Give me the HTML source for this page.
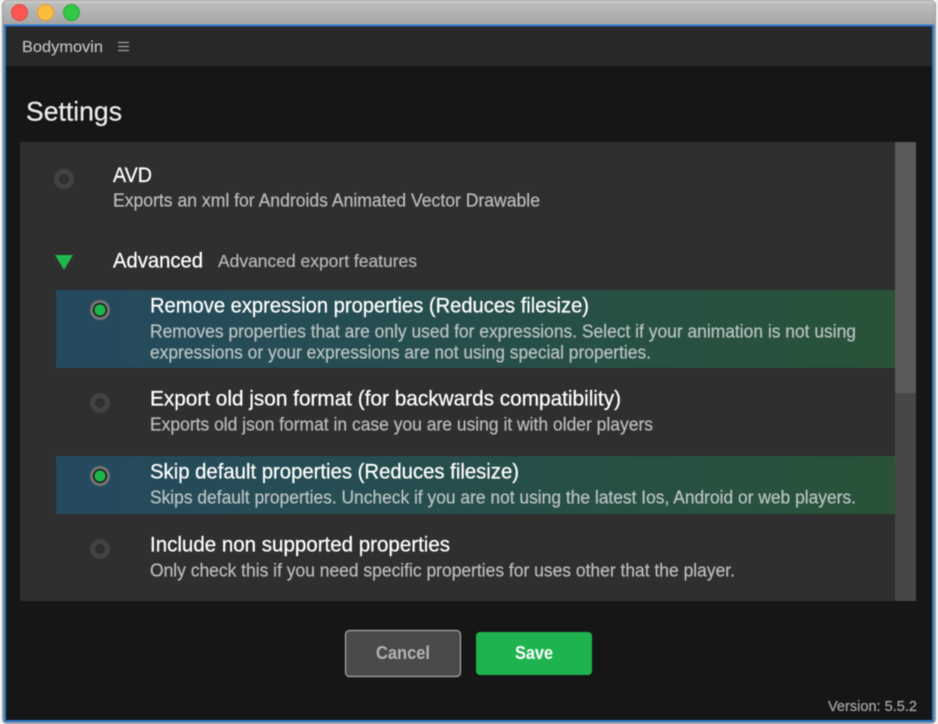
<!DOCTYPE html>
<html><head><meta charset="utf-8"><style>
html,body{margin:0;padding:0;background:#f2f2f2;width:938px;height:724px;overflow:hidden}
svg{display:block;font-family:"Liberation Sans",sans-serif;filter:blur(.45px)}
</style></head><body>
<svg width="938" height="724" viewBox="0 0 938 724" xmlns="http://www.w3.org/2000/svg">
<defs>
<linearGradient id="tb" x1="0" y1="0" x2="0" y2="1"><stop offset="0" stop-color="#d4d4d4"/><stop offset=".1" stop-color="#bcbcbc"/><stop offset="1" stop-color="#a2a2a2"/></linearGradient>
<linearGradient id="row" x1="0" y1="0" x2="1" y2="0"><stop offset="0" stop-color="#254a60"/><stop offset="1" stop-color="#295338"/></linearGradient>
</defs>
<rect width="938" height="724" fill="#f2f2f2"/>
<rect x="2" y="0" width="934" height="724" rx="5" fill="#9a9a9a"/>
<rect x="3" y="1" width="932" height="26" rx="4" fill="url(#tb)"/>
<circle cx="19.500" cy="12.500" r="8" fill="#fc5753" stroke="#df4744"/>
<circle cx="45.500" cy="12.500" r="8" fill="#fdbc40" stroke="#de9f34"/>
<circle cx="71.500" cy="12.500" r="8" fill="#33c748" stroke="#27aa35"/>
<rect x="5" y="25.500" width="928" height="695.500" fill="#161616" stroke="#2b78cf" stroke-width="2"/>
<rect x="6" y="27" width="926" height="39" fill="#282828"/>
<text x="22" y="52" font-size="16" fill="#bdbdbd" stroke="#bdbdbd" stroke-width=".2" textLength="81" lengthAdjust="spacingAndGlyphs">Bodymovin</text>
<path d="M118 42.500h11M118 46.500h11M118 50.500h11" stroke="#a0a0a0" stroke-width="1.300" fill="none"/>
<text x="26" y="120.500" font-size="27" fill="#ececec" stroke="#ececec" stroke-width=".25" textLength="96" lengthAdjust="spacingAndGlyphs">Settings</text>

<rect x="20" y="142" width="875" height="459" fill="#2f2f2f"/>
<rect x="895" y="142" width="21" height="459" fill="#474747"/>
<rect x="895" y="142" width="21" height="251" fill="#5a5a5a"/>

<circle cx="64" cy="179" r="7.500" fill="#2f2f2f" stroke="#424242" stroke-width="5"/>
<text x="113" y="182" font-size="21" fill="#fff" stroke="#fff" stroke-width=".25" textLength="39" lengthAdjust="spacingAndGlyphs">AVD</text>
<text x="113" y="206.500" font-size="18" fill="#bdbdbd" stroke="#bdbdbd" stroke-width=".2" textLength="427" lengthAdjust="spacingAndGlyphs">Exports an xml for Androids Animated Vector Drawable</text>

<path d="M55 255h18l-9 15z" fill="#1fb84c"/>
<text x="113" y="267.500" font-size="21" fill="#fff" stroke="#fff" stroke-width=".25" textLength="90" lengthAdjust="spacingAndGlyphs">Advanced</text>
<text x="218" y="267" font-size="17.500" fill="#b8b8b8" stroke="#b8b8b8" stroke-width=".2" textLength="199" lengthAdjust="spacingAndGlyphs">Advanced export features</text>

<rect x="56" y="290" width="839" height="78" fill="url(#row)"/>
<circle cx="100" cy="310" r="10" fill="#747474"/>
<circle cx="100" cy="310" r="7" fill="#111"/>
<circle cx="100" cy="310" r="5.600" fill="#1db64a"/>
<text x="150" y="312.700" font-size="21" fill="#fff" stroke="#fff" stroke-width=".25" textLength="439" lengthAdjust="spacingAndGlyphs">Remove expression properties (Reduces filesize)</text>
<text x="150" y="337.500" font-size="18" fill="#bcc4c4" stroke="#bcc4c4" stroke-width=".2" textLength="706" lengthAdjust="spacingAndGlyphs">Removes properties that are only used for expressions. Select if your animation is not using</text>
<text x="150" y="358.300" font-size="18" fill="#bcc4c4" stroke="#bcc4c4" stroke-width=".2" textLength="501" lengthAdjust="spacingAndGlyphs">expressions or your expressions are not using special properties.</text>

<circle cx="100" cy="403" r="7.500" fill="#2f2f2f" stroke="#424242" stroke-width="5"/>
<text x="150" y="405.700" font-size="21" fill="#fff" stroke="#fff" stroke-width=".25" textLength="471" lengthAdjust="spacingAndGlyphs">Export old json format (for backwards compatibility)</text>
<text x="150" y="430.500" font-size="18" fill="#bdbdbd" stroke="#bdbdbd" stroke-width=".2" textLength="503" lengthAdjust="spacingAndGlyphs">Exports old json format in case you are using it with older players</text>

<rect x="56" y="456" width="839" height="58" fill="url(#row)"/>
<circle cx="100" cy="476" r="10" fill="#747474"/>
<circle cx="100" cy="476" r="7" fill="#111"/>
<circle cx="100" cy="476" r="5.600" fill="#1db64a"/>
<text x="150" y="478.700" font-size="21" fill="#fff" stroke="#fff" stroke-width=".25" textLength="369" lengthAdjust="spacingAndGlyphs">Skip default properties (Reduces filesize)</text>
<text x="150" y="503.500" font-size="18" fill="#bcc4c4" stroke="#bcc4c4" stroke-width=".2" textLength="706" lengthAdjust="spacingAndGlyphs">Skips default properties. Uncheck if you are not using the latest Ios, Android or web players.</text>

<circle cx="100" cy="549" r="7.500" fill="#2f2f2f" stroke="#424242" stroke-width="5"/>
<text x="150" y="551.700" font-size="21" fill="#fff" stroke="#fff" stroke-width=".25" textLength="300" lengthAdjust="spacingAndGlyphs">Include non supported properties</text>
<text x="150" y="576.500" font-size="18" fill="#bdbdbd" stroke="#bdbdbd" stroke-width=".2" textLength="585" lengthAdjust="spacingAndGlyphs">Only check this if you need specific properties for uses other that the player.</text>

<rect x="345.500" y="630.500" width="115" height="46" rx="4" fill="#4a4a4a" stroke="#a8a8a8" stroke-width="1.200"/>
<text x="376" y="659" font-size="18" font-weight="bold" fill="#b4b4b4" textLength="54" lengthAdjust="spacingAndGlyphs">Cancel</text>
<rect x="476" y="632" width="116" height="43" rx="4" fill="#1fb34f"/>
<text x="515" y="659" font-size="18" font-weight="bold" fill="#fff" textLength="38" lengthAdjust="spacingAndGlyphs">Save</text>
<text x="828" y="711" font-size="15" fill="#a8a8a8" stroke="#a8a8a8" stroke-width=".2" textLength="89" lengthAdjust="spacingAndGlyphs">Version: 5.5.2</text>
</svg>
</body></html>
